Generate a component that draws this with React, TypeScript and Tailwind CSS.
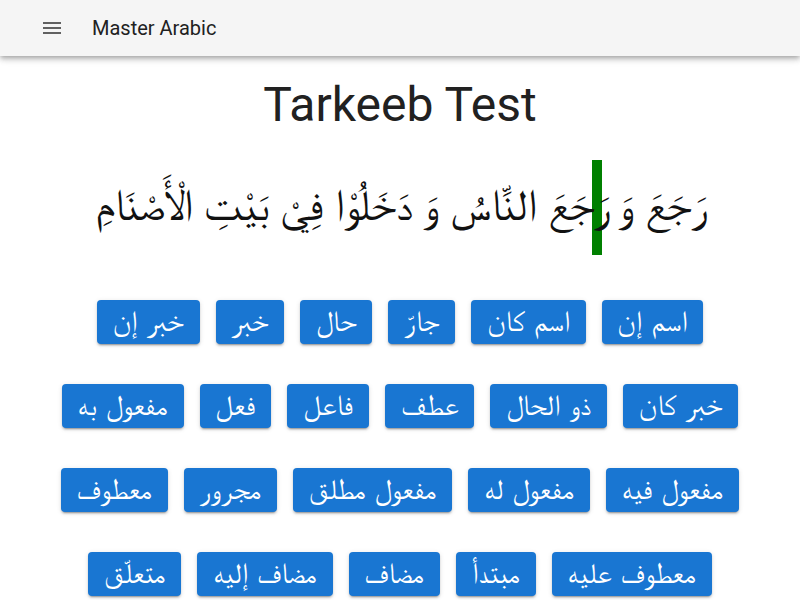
import React from "react";

const rows: string[][] = [
  ["اسم إن", "اسم كان", "جارّ", "حال", "خبر", "خبر إن"],
  ["خبر كان", "ذو الحال", "عطف", "فاعل", "فعل", "مفعول به"],
  ["مفعول فيه", "مفعول له", "مفعول مطلق", "مجرور", "معطوف"],
  ["معطوف عليه", "مبتدأ", "مضاف", "مضاف إليه", "متعلّق"],
];

const arabicFont = "font-['FreeSerif','Amiri','DejaVu_Sans',serif]";

export default function App() {
  return (
    <div className="min-h-[600px] w-[800px] bg-white font-['Roboto',sans-serif]">
      <header className="h-14 bg-[#f5f5f5] flex items-center shadow-[0_2px_4px_-1px_rgba(0,0,0,0.2),0_4px_5px_0_rgba(0,0,0,0.14),0_1px_10px_0_rgba(0,0,0,0.12)] relative z-10">
        <div className="w-6 h-6 ml-10 flex items-center justify-center">
          <svg width="24" height="24" viewBox="0 0 24 24" fill="#616161">
            <path d="M3 18h18v-2H3v2zm0-5h18v-2H3v2zm0-7v2h18V6H3z" />
          </svg>
        </div>
        <div className="ml-7 text-[20px] text-[#212121] leading-none">Master Arabic</div>
      </header>
      <main className="flex flex-col items-center">
        <h1 className="mt-[20px] text-[48px] leading-[58px] text-[#212121] font-normal">Tarkeeb Test</h1>
        <div
          dir="rtl"
          className={`mt-[26px] h-[95px] leading-[95px] whitespace-nowrap text-[44px] text-[#111] ${arabicFont}`}
        >
          <span>رَجَعَ وَ </span>
          <span className="relative inline-block h-[95px] align-top">
            <span className="absolute top-0 right-[5px] w-[10px] h-[95px] bg-[#008000]" />
            <span className="relative">رَجَعَ</span>
          </span>
          <span> النَّاسُ وَ دَخَلُوْا فِيْ بَيْتِ الْأَصْنَامِ</span>
        </div>
        <div className="mt-[45px] flex flex-col gap-10">
          {rows.map((row, i) => (
            <div key={i} dir="rtl" className="flex justify-center gap-4">
              {row.map((label) => (
                <button
                  key={label}
                  className={`h-11 min-w-16 px-4 rounded bg-[#1976d2] text-white text-[29px] leading-none [word-spacing:2px] shadow-[0_3px_1px_-2px_rgba(0,0,0,0.2),0_2px_2px_0_rgba(0,0,0,0.14),0_1px_5px_0_rgba(0,0,0,0.12)] ${arabicFont}`}
                >
                  {label}
                </button>
              ))}
            </div>
          ))}
        </div>
      </main>
    </div>
  );
}
